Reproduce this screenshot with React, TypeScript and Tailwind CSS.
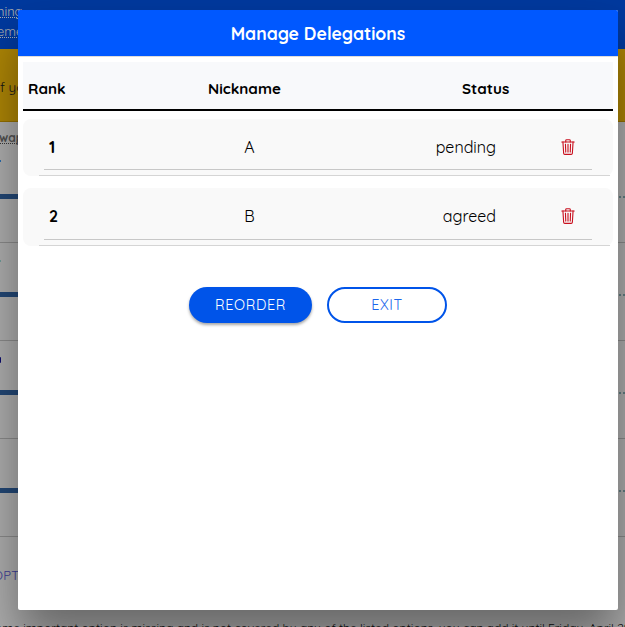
import { IoTrashOutline } from "react-icons/io5";

const delegations = [
  { rank: 1, nickname: "A", status: "pending" },
  { rank: 2, nickname: "B", status: "agreed" },
];

const marks = ["bg-[#3d9fff] h-[2px] mt-[15px]", "bg-[#a5e6e0] h-[2px] mt-[17px]", "bg-[#1010a0] h-[6px] mt-4 rounded-r-full", "h-0"];

function PollPage() {
  return (
    <div className="flex h-full w-full flex-col overflow-hidden whitespace-nowrap bg-white">
      <div className="h-[49px] shrink-0 bg-[#0054e9] pt-[5px] text-[12.8px] leading-[20px] text-white">
        <div className="flex h-[20px]">
          <span className="-ml-[3px] h-[13px] border-b border-dotted border-white leading-[13px]">ning</span>
        </div>
        <div className="flex h-[20px]">
          <span className="-ml-[3px] h-[13px] border-b border-dotted border-white leading-[13px]">ement</span>
        </div>
      </div>
      <div className="h-[73px] shrink-0 border-b border-[#d9a400] bg-[#ffc409] pt-[28px] text-[13.6px] leading-[20px] text-[#222]">
        f you
      </div>
      <div className="flex h-[23px] shrink-0 pt-[9px] text-[12px] font-bold text-[#777]">
        <span className="-ml-px h-[13px] border-b border-dotted border-[#555] leading-[13px]">wap</span>
      </div>
      {marks.map((mark, i) => (
        <div key={i} className="flex h-[98px] shrink-0 flex-col border-b border-[#ccc]">
          <div className="h-[49px]">
            <div className={`w-px ${mark}`} />
          </div>
          <div className="flex h-[5px] items-center">
            <div className="h-[5px] w-[300px] bg-[#3369ad]" />
            <div className="ml-[320px] flex gap-[2px]">
              <div className="h-[2px] w-[2px] bg-[#8fb8c0]" />
              <div className="h-[2px] w-[2px] bg-[#8fb8c0]" />
            </div>
          </div>
        </div>
      ))}
      <div className="-ml-[7px] h-[81px] shrink-0 pt-[28px] text-[13px] leading-[20px] tracking-[0.3px] text-[#5a5ae0]">
        OPTION
      </div>
      <div className="-ml-[5px] shrink-0 text-[12px] leading-[20px] text-[#111]">
        ome important option is missing and is not covered by any of the listed options, you can add it until Friday, April 29
      </div>
    </div>
  );
}

export default function App() {
  return (
    <div className="relative h-[627px] w-[625px] overflow-hidden font-['Quicksand',Lato,sans-serif] text-black">
      <PollPage />
      <div className="absolute inset-0 bg-black/[0.32] pl-[18px] pt-[10px]">
        <div className="flex h-[600px] w-[600px] flex-col overflow-hidden rounded-[2px] bg-white shadow-[0_28px_48px_rgba(0,0,0,0.4)]">
          <header className="flex h-[47px] shrink-0 items-center justify-center border-b border-[#dcdcdc] bg-[#0058ff]">
            <h1 className="text-[17.6px] font-bold text-white">Manage Delegations</h1>
          </header>
          <main className="px-[5px] pt-[5px]">
            <div className="grid h-[49px] grid-cols-[100px_242px_1fr] items-center border-b-2 border-black bg-[#f8f9fb] pl-[5px] pt-[8px] text-[15.2px] font-bold">
              <span>Rank</span>
              <span className="pl-[80px]">Nickname</span>
              <span className="pl-[92px]">Status</span>
            </div>
            <div className="mt-2 flex flex-col gap-3">
              {delegations.map((d) => (
                <div key={d.rank} className={`rounded-[8px] bg-[#f9f9f9] pl-4 pr-[3px] ${d.rank === 1 ? "h-[57px]" : "h-[58px]"}`}>
                  <div className="h-full border-b border-[#d5d5d5] pl-[5px] pr-[18px]">
                    <div className={`flex items-center border-b border-[#c8c8c8] pl-[5px] pt-[5px] text-base ${d.rank === 1 ? "h-[51px]" : "h-[52px] pb-px"}`}>
                      <span className="w-[189px] font-bold">{d.rank}</span>
                      <span className="w-[23px] text-center">{d.nickname}</span>
                      <span className="w-[235px] text-right">{d.status}</span>
                      <IoTrashOutline className="ml-[62.5px] h-[18px] w-[18px] text-[#c9101f]" />
                    </div>
                  </div>
                </div>
              ))}
            </div>
            <div className="mt-[41px] flex gap-[15px] pl-[166px] text-[14.4px] tracking-[0.6px]">
              <button className="h-9 w-[123px] rounded-full bg-[#0054e9] pt-[2px] text-white shadow-[0_2px_3px_rgba(0,0,0,0.35)]">REORDER</button>
              <button className="h-9 w-[120px] rounded-full border-2 border-[#0054e9] pt-[2px] text-[#1a66ec]">EXIT</button>
            </div>
          </main>
        </div>
      </div>
    </div>
  );
}
